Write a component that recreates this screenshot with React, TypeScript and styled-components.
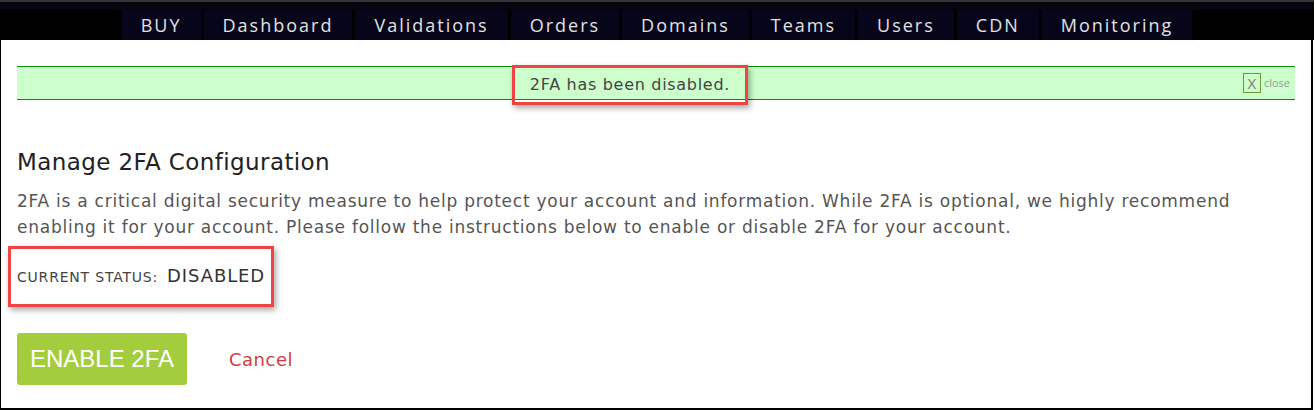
import React from 'react';
import styled, { createGlobalStyle } from 'styled-components';

const GlobalStyle = createGlobalStyle`
  html, body {
    margin: 0;
    padding: 0;
    background: #ffffff;
  }
  body {
    font-family: 'DejaVu Sans', 'Liberation Sans', sans-serif;
  }
`;

const Page = styled.div`
  width: 1315px;
  height: 410px;
  box-sizing: border-box;
  display: flex;
  flex-direction: column;
`;

const TopBar = styled.header`
  background: #06040f;
  border-top: 2px solid #353535;
  padding-top: 8px;
  width: 1314px;
`;

const NavList = styled.nav`
  background: #000000;
  display: flex;
  justify-content: center;
  gap: 3px;
  height: 30px;
`;

const NavTab = styled.a`
  background: #07051a;
  color: #e2e2e2;
  font-family: 'Open Sans', 'DejaVu Sans', sans-serif;
  font-size: 18px;
  letter-spacing: 2px;
  padding: 0 19px;
  display: flex;
  align-items: center;
  text-decoration: none;
`;

const Content = styled.main`
  flex: 1;
  width: 1313px;
  box-sizing: border-box;
  border-left: 1px solid #000;
  border-right: 2px solid #000;
  border-bottom: 2px solid #000;
  padding: 26px 16px 0 16px;
`;

const Alert = styled.div`
  height: 32px;
  background: #ccffcc;
  border-top: 1px solid #0a8a0a;
  border-bottom: 1px solid #0a8a0a;
  display: flex;
  align-items: center;
  padding-right: 5px;
  color: #444;
  font-size: 16px;
  line-height: 20px;
`;

const AlertMessage = styled.div`
  flex: 1;
  text-align: center;
  padding-top: 3px;
  letter-spacing: 0.7px;
`;

const Highlight = styled.span<{ $padX: number; $padY: number }>`
  position: relative;
  display: inline-block;

  &::after {
    content: '';
    position: absolute;
    top: -${(p) => p.$padY}px;
    bottom: -${(p) => p.$padY}px;
    left: -${(p) => p.$padX}px;
    right: -${(p) => p.$padX}px;
    border: 3px solid #ef4444;
    box-shadow: 2px 3px 6px rgba(0, 0, 0, 0.35);
    pointer-events: none;
  }
`;

const CloseControl = styled.div`
  display: flex;
  align-items: center;
  gap: 3px;
  color: #999;
  font-family: 'Open Sans', sans-serif;
  font-size: 11px;
`;

const CloseBox = styled.span`
  border: 1px solid #6f9a2e;
  color: #7a7a7a;
  font-size: 15px;
  line-height: 18px;
  width: 16px;
  text-align: center;
`;

const Heading = styled.h2`
  margin: 48px 0 0 0;
  font-size: 23px;
  line-height: 28px;
  font-weight: normal;
  letter-spacing: 0.4px;
  color: #222;
`;

const Description = styled.p`
  margin: 12px 0 0 0;
  max-width: 1240px;
  font-size: 17px;
  line-height: 26px;
  letter-spacing: 0.75px;
  color: #555;
`;

const StatusRow = styled.div`
  margin: 24px 0 0 0;
  display: flex;
  align-items: center;
  line-height: 24px;
`;

const StatusLabel = styled.span`
  font-size: 14px;
  letter-spacing: 0.8px;
  color: #444;
  text-transform: uppercase;
  margin-right: 9px;
`;

const StatusValue = styled.span`
  font-size: 18px;
  letter-spacing: 0.9px;
  color: #333;
`;

const Actions = styled.div`
  margin: 44px 0 0 0;
  display: flex;
  align-items: center;
  gap: 42px;
`;

const EnableButton = styled.button`
  width: 170px;
  height: 52px;
  border: none;
  border-radius: 3px;
  background: #a4cd3e;
  color: #ffffff;
  font-family: 'Liberation Sans', Arial, sans-serif;
  font-size: 24px;
  cursor: pointer;
`;

const CancelLink = styled.a`
  color: #d23c3c;
  font-size: 18px;
  letter-spacing: 0.5px;
  text-decoration: none;
  cursor: pointer;
`;

const navItems = ['BUY', 'Dashboard', 'Validations', 'Orders', 'Domains', 'Teams', 'Users', 'CDN', 'Monitoring'];

export default function App() {
  return (
    <>
      <GlobalStyle />
      <Page>
        <TopBar>
          <NavList>
            {navItems.map((item) => (
              <NavTab key={item}>{item}</NavTab>
            ))}
          </NavList>
        </TopBar>
        <Content>
          <Alert>
            <AlertMessage>
              <Highlight $padX={18} $padY={10}>2FA has been disabled.</Highlight>
            </AlertMessage>
            <CloseControl>
              <CloseBox>X</CloseBox>
              close
            </CloseControl>
          </Alert>
          <Heading>Manage 2FA Configuration</Heading>
          <Description>
            2FA is a critical digital security measure to help protect your account and information. While 2FA is
            optional, we highly recommend enabling it for your account. Please follow the instructions below to enable
            or disable 2FA for your account.
          </Description>
          <StatusRow>
            <Highlight $padX={9} $padY={18}>
              <StatusLabel>Current Status:</StatusLabel>
              <StatusValue>DISABLED</StatusValue>
            </Highlight>
          </StatusRow>
          <Actions>
            <EnableButton>ENABLE 2FA</EnableButton>
            <CancelLink>Cancel</CancelLink>
          </Actions>
        </Content>
      </Page>
    </>
  );
}
